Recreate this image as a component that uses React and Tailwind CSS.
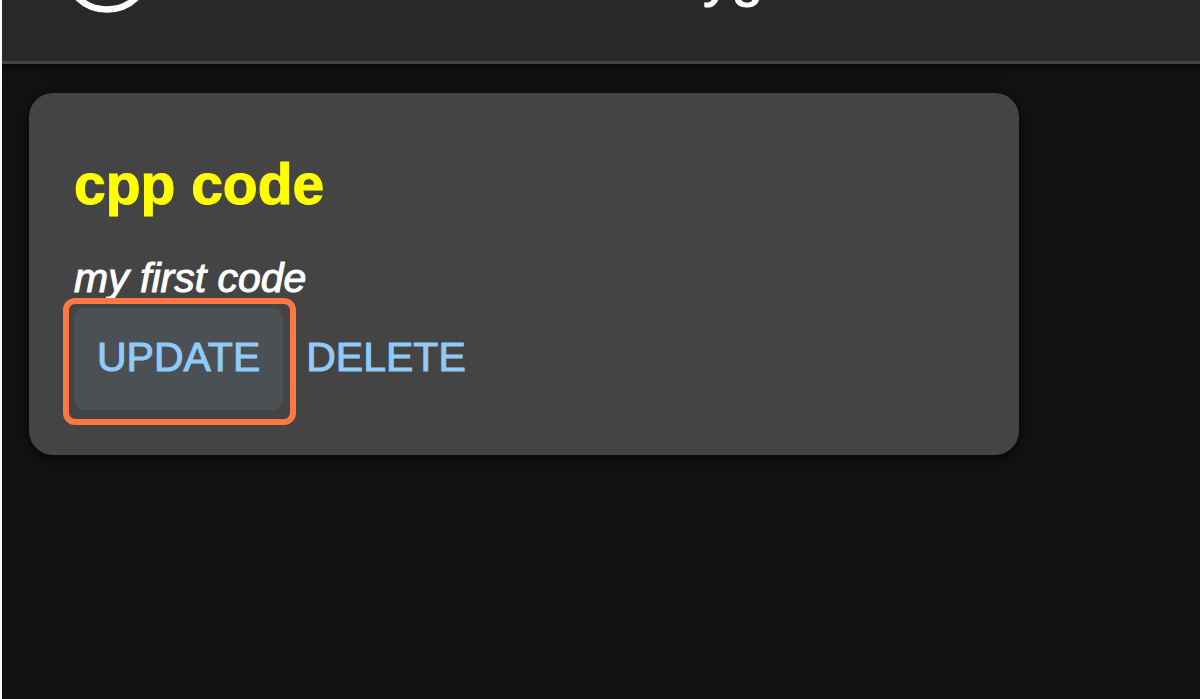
export default function App() {
  return (
    <div className="min-h-screen bg-[#f8faff] pl-0.5 font-['Liberation_Sans',Arial,sans-serif] text-white">
      <div className="min-h-screen overflow-hidden bg-[#121212]">
        <header className="h-16 border-b-3 border-[#434343] bg-[#282828] shadow-[0_2px_12px_rgba(0,0,0,0.8)]">
          <div className="flex h-full items-end overflow-hidden pl-[59px]">
            <svg className="mb-12 size-23 shrink-0" viewBox="0 0 92 92" fill="none" aria-hidden="true">
              <circle cx="46" cy="46" r="42.5" stroke="white" strokeWidth="6.5" />
            </svg>
            <h1 className="mb-14 ml-[550px] text-[57px] leading-[60px] [-webkit-text-stroke:1px]">yg</h1>
          </div>
        </header>
        <main className="px-[27px] pt-[29px]">
          <article className="w-full max-w-[990px] rounded-[24px] bg-[#444444] px-[45px] pt-[59px] pb-[45px] shadow-[0_3px_16px_rgba(0,0,0,0.7)]">
            <h2 className="text-[57px] leading-[64px] font-bold text-[#ffff00] [-webkit-text-stroke:1px]">cpp code</h2>
            <p className="mt-[38px] text-[41px] leading-[48px] italic [-webkit-text-stroke:1px]">my first code</p>
            <div className="mt-[6px] flex text-[41px] leading-[48px] text-[#90caf9]">
              <div className="relative">
                <button type="button" className="h-[102px] rounded-[11px] bg-[#4b5054] px-[23px] pb-1 [-webkit-text-stroke:1px]">UPDATE</button>
                <span className="pointer-events-none absolute -top-[10px] -right-[13px] -bottom-[15px] -left-[11px] rounded-[12px] border-6 border-[#ff7744]" />
              </div>
              <button type="button" className="h-[102px] px-[23px] pb-1 [-webkit-text-stroke:1px]">DELETE</button>
            </div>
          </article>
        </main>
      </div>
    </div>
  );
}
